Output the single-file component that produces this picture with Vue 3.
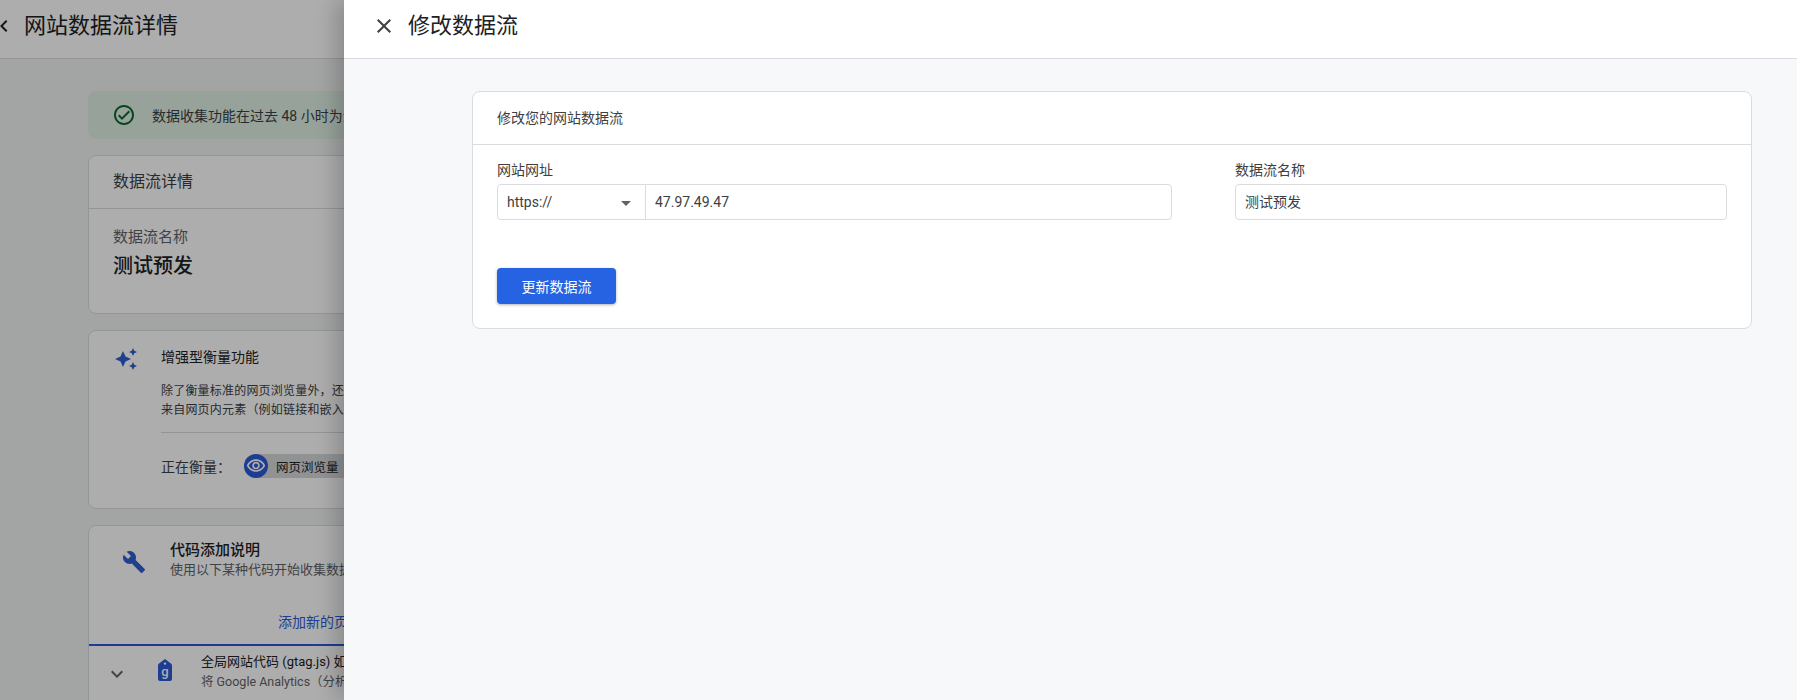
<script setup>
const CLOSE = 'M19 6.41L17.59 5 12 10.59 6.41 5 5 6.41 10.59 12 5 17.59 6.41 19 12 13.41 17.59 19 19 17.59 13.41 12z'
</script>

<template>
  <div class="page">
    <header class="page-header">
      <svg class="back" viewBox="0 0 24 24" width="24" height="24"><path d="M15.41 7.41L14 6l-6 6 6 6 1.41-1.41L10.83 12z" /></svg>
      <h1>网站数据流详情</h1>
    </header>

    <main class="page-body">
      <div class="alert">
        <svg viewBox="0 0 24 24" width="24" height="24"><path d="M12 2C6.48 2 2 6.48 2 12s4.48 10 10 10 10-4.48 10-10S17.52 2 12 2zm0 18c-4.41 0-8-3.59-8-8s3.59-8 8-8 8 3.59 8 8-3.59 8-8 8zm4.59-12.42L10 14.17l-2.59-2.58L6 13l4 4 8-8z" /></svg>
        <span>数据收集功能在过去 48 小时为活跃状态。</span>
      </div>

      <section class="card">
        <div class="card-title">数据流详情</div>
        <div class="stream">
          <div class="stream-label">数据流名称</div>
          <div class="stream-name">测试预发</div>
        </div>
      </section>

      <section class="card measure">
        <svg class="spark" viewBox="0 0 24 24" width="24" height="24"><path d="M19 9l1.25-2.75L23 5l-2.75-1.25L19 1l-1.25 2.75L15 5l2.75 1.25L19 9zm-7.5.5L9 4 6.5 9.5 1 12l5.5 2.5L9 20l2.5-5.5L17 12l-5.5-2.5zM19 15l-1.25 2.75L15 19l2.75 1.25L19 23l1.25-2.75L23 19l-2.75-1.25L19 15z" /></svg>
        <div class="measure-main">
          <div class="measure-title">增强型衡量功能</div>
          <p class="measure-desc">除了衡量标准的网页浏览量外，还可以自动衡量网站上的互动和内容。<br />来自网页内元素（例如链接和嵌入视频）的数据可能会随网页浏览事件一起收集。</p>
          <div class="measuring">
            <span>正在衡量：</span>
            <span class="chip">
              <span class="chip-icon">
                <svg viewBox="0 0 24 24" width="20" height="20"><path d="M12 6c3.79 0 7.17 2.13 8.82 5.5C19.17 14.87 15.79 17 12 17s-7.17-2.13-8.82-5.5C4.83 8.13 8.21 6 12 6m0-2C7 4 2.73 7.11 1 11.5 2.73 15.89 7 19 12 19s9.27-3.11 11-7.5C21.27 7.11 17 4 12 4zm0 5c1.38 0 2.5 1.12 2.5 2.5S13.38 14 12 14s-2.5-1.12-2.5-2.5S10.62 9 12 9m0-2c-2.48 0-4.5 2.02-4.5 4.5S9.52 16 12 16s4.5-2.02 4.5-4.5S14.48 7 12 7z" /></svg>
              </span>
              网页浏览量
            </span>
          </div>
        </div>
      </section>

      <section class="card code">
        <div class="code-head">
          <svg class="wrench" viewBox="0 0 24 24" width="24" height="24"><path d="M22.7 19l-9.1-9.1c.9-2.3.4-5-1.5-6.9-2-2-5-2.4-7.4-1.3L9 6 6 9 1.6 4.7C.4 7.1.9 10.1 2.9 12.1c1.9 1.9 4.6 2.4 6.9 1.5l9.1 9.1c.4.4 1 .4 1.4 0l2.3-2.3c.5-.4.5-1.1.1-1.4z" /></svg>
          <div>
            <div class="code-title">代码添加说明</div>
            <div class="code-sub">使用以下某种代码开始收集数据。</div>
          </div>
        </div>
        <div class="code-tab"><span>添加新的页内代码</span></div>
        <div class="code-row">
          <svg class="chevron" viewBox="0 0 24 24" width="24" height="24"><path d="M16.59 8.59L12 13.17 7.41 8.59 6 10l6 6 6-6z" /></svg>
          <svg class="tag" viewBox="0 0 14 22" width="14" height="22">
            <path d="M7 0L12.6 4.2C13.5 4.9 14 5.6 14 6.7V20a2 2 0 0 1-2 2H2a2 2 0 0 1-2-2V6.7C0 5.6.5 4.9 1.4 4.2z" />
            <circle cx="7" cy="4.6" r="1.2" fill="#fff" />
            <text x="7" y="16.5" text-anchor="middle">g</text>
          </svg>
          <div>
            <div class="row-title">全局网站代码 (gtag.js) 如果您使用的是建站工具</div>
            <div class="row-sub">将 Google Analytics（分析）代码直接添加到网页中</div>
          </div>
        </div>
      </section>
    </main>

    <div class="scrim"></div>

    <aside class="drawer">
      <header class="drawer-header">
        <svg class="close" viewBox="0 0 24 24" width="24" height="24"><path :d="CLOSE" /></svg>
        <h2>修改数据流</h2>
      </header>
      <div class="drawer-body">
        <section class="form-card">
          <div class="form-title">修改您的网站数据流</div>
          <div class="form-body">
            <div class="fields">
              <div>
                <div class="field-label">网站网址</div>
                <div class="url-box">
                  <div class="protocol">
                    https://
                    <i class="caret"></i>
                  </div>
                  <div class="url-value">47.97.49.47</div>
                </div>
              </div>
              <div>
                <div class="field-label">数据流名称</div>
                <div class="text-box">测试预发</div>
              </div>
            </div>
            <button class="submit">更新数据流</button>
          </div>
        </section>
      </div>
    </aside>
  </div>
</template>

<style>
html,
body {
  margin: 0;
}
</style>

<style scoped>
.page {
  position: relative;
  height: 700px;
  overflow: hidden;
  background: #f1f3f4;
  color: #202124;
  font-family: Roboto, "Noto Sans CJK SC", sans-serif;
}
.page-header {
  box-sizing: border-box;
  height: 59px;
  padding-bottom: 6px;
  display: flex;
  align-items: center;
  background: #fff;
  border-bottom: 1px solid #dadce0;
}
.page-header h1,
.drawer-header h2 {
  margin: -6px 0 0;
  font-size: 22px;
  font-weight: 400;
  color: #202124;
}
.back {
  margin-left: -8px;
  margin-right: 8px;
  fill: #202124;
}
.page-body {
  padding: 32px 45px 0 88px;
}
.alert {
  height: 48px;
  display: flex;
  align-items: center;
  gap: 16px;
  padding-left: 24px;
  margin-bottom: 16px;
  border-radius: 8px;
  background: #dff1e4;
  font-size: 14px;
  color: #3c4043;
}
.alert svg {
  fill: #0d652d;
}
.card {
  background: #fff;
  border: 1px solid #dadce0;
  border-radius: 8px;
  margin-bottom: 16px;
}
.card-title {
  height: 52px;
  line-height: 52px;
  padding-left: 24px;
  font-size: 16px;
  border-bottom: 1px solid #dadce0;
  color: #3c4043;
}
.stream {
  height: 104px;
  padding: 18px 24px 0;
  box-sizing: border-box;
}
.stream-label {
  font-size: 15px;
  line-height: 20px;
  color: #5f6368;
}
.stream-name {
  margin-top: 5px;
  font-size: 20px;
  line-height: 28px;
  font-weight: 500;
}
.measure {
  height: 179px;
  box-sizing: border-box;
  display: flex;
  padding: 16px 24px 0 25px;
  gap: 23px;
}
.spark {
  flex: none;
  fill: #2f5fd0;
}
.measure-main {
  flex: 1;
}
.measure-title {
  font-size: 14px;
  line-height: 20px;
}
.measure-desc {
  margin: 15px 0 0;
  padding-bottom: 12px;
  border-bottom: 1px solid #dadce0;
  font-size: 12px;
  line-height: 19px;
  letter-spacing: 0.2px;
  color: #3c4043;
}
.measuring {
  display: flex;
  align-items: center;
  gap: 13px;
  margin-top: 21px;
  font-size: 14px;
  color: #3c4043;
}
.chip {
  display: flex;
  align-items: center;
  gap: 8px;
  height: 24px;
  width: 130px;
  border-radius: 12px;
  background: #d6d8da;
  font-size: 12.5px;
  color: #202124;
}
.chip-icon {
  width: 24px;
  height: 24px;
  display: flex;
  align-items: center;
  justify-content: center;
  border-radius: 50%;
  background: #2a5bd7;
}
.chip-icon svg {
  fill: #fff;
}
.code {
  height: 300px;
}
.code-head {
  display: flex;
  gap: 24px;
  padding: 14px 0 0 33px;
  height: 66px;
}
.wrench {
  margin-top: 10px;
  fill: #2f5fd0;
}
.code-title {
  font-size: 15px;
  line-height: 20px;
  font-weight: 500;
}
.code-sub {
  font-size: 13px;
  line-height: 19px;
  color: #5f6368;
}
.code-tab {
  height: 38px;
  padding-left: 189px;
  font-size: 14px;
  line-height: 32px;
  color: #2a5bd7;
  border-bottom: 2px solid #2a5bd7;
}
.code-row {
  display: flex;
  align-items: flex-start;
  padding: 6px 0 0 16px;
}
.chevron {
  margin-top: 10px;
  fill: #5f6368;
}
.tag {
  flex: none;
  margin: 7px 29px 0 29px;
  fill: #2a5bd7;
}
.tag text {
  fill: #fff;
  font-size: 13px;
  font-weight: 500;
}
.row-title {
  font-size: 13px;
  line-height: 20px;
  white-space: nowrap;
}
.row-sub {
  font-size: 12.5px;
  line-height: 20px;
  color: #5f6368;
  white-space: nowrap;
}
.scrim {
  position: absolute;
  inset: 0;
  background: rgba(0, 0, 0, 0.32);
}
.drawer {
  position: absolute;
  top: 0;
  right: 0;
  bottom: 0;
  left: 344px;
  background: #f7f8fa;
  box-shadow: -8px 0 20px rgba(0, 0, 0, 0.2);
}
.drawer-header {
  box-sizing: border-box;
  height: 59px;
  padding: 0 0 6px 28px;
  display: flex;
  align-items: center;
  gap: 12px;
  background: #fff;
  border-bottom: 1px solid #dadce0;
}
.close {
  fill: #3c4043;
}
.drawer-body {
  padding: 32px 45px 0 128px;
}
.form-card {
  background: #fff;
  border: 1px solid #dadce0;
  border-radius: 8px;
}
.form-title {
  height: 52px;
  line-height: 52px;
  padding-left: 24px;
  font-size: 14px;
  color: #3c4043;
  border-bottom: 1px solid #dadce0;
}
.form-body {
  padding: 15px 24px 24px;
}
.fields {
  display: grid;
  grid-template-columns: 54.9% 40%;
  justify-content: space-between;
}
.field-label {
  font-size: 14px;
  line-height: 20px;
  margin-bottom: 4px;
  color: #3c4043;
}
.url-box,
.text-box {
  box-sizing: border-box;
  height: 36px;
  border: 1px solid #dadce0;
  border-radius: 4px;
  font-size: 14px;
  line-height: 35px;
  color: #3c4043;
}
.url-box {
  display: flex;
}
.protocol {
  position: relative;
  flex: none;
  width: 148px;
  box-sizing: border-box;
  padding-left: 9px;
  border-right: 1px solid #dadce0;
}
.caret {
  position: absolute;
  right: 14px;
  top: 16px;
  border-left: 5.5px solid transparent;
  border-right: 5.5px solid transparent;
  border-top: 5.5px solid #5f6368;
}
.url-value {
  padding-left: 9px;
}
.text-box {
  padding-left: 9px;
}
.submit {
  display: block;
  width: 119px;
  height: 36px;
  margin-top: 48px;
  border: 0;
  border-radius: 4px;
  background: #2563e3;
  color: #fff;
  font-family: inherit;
  font-size: 14px;
  box-shadow: 0 1px 3px rgba(60, 64, 67, 0.4);
}
</style>
